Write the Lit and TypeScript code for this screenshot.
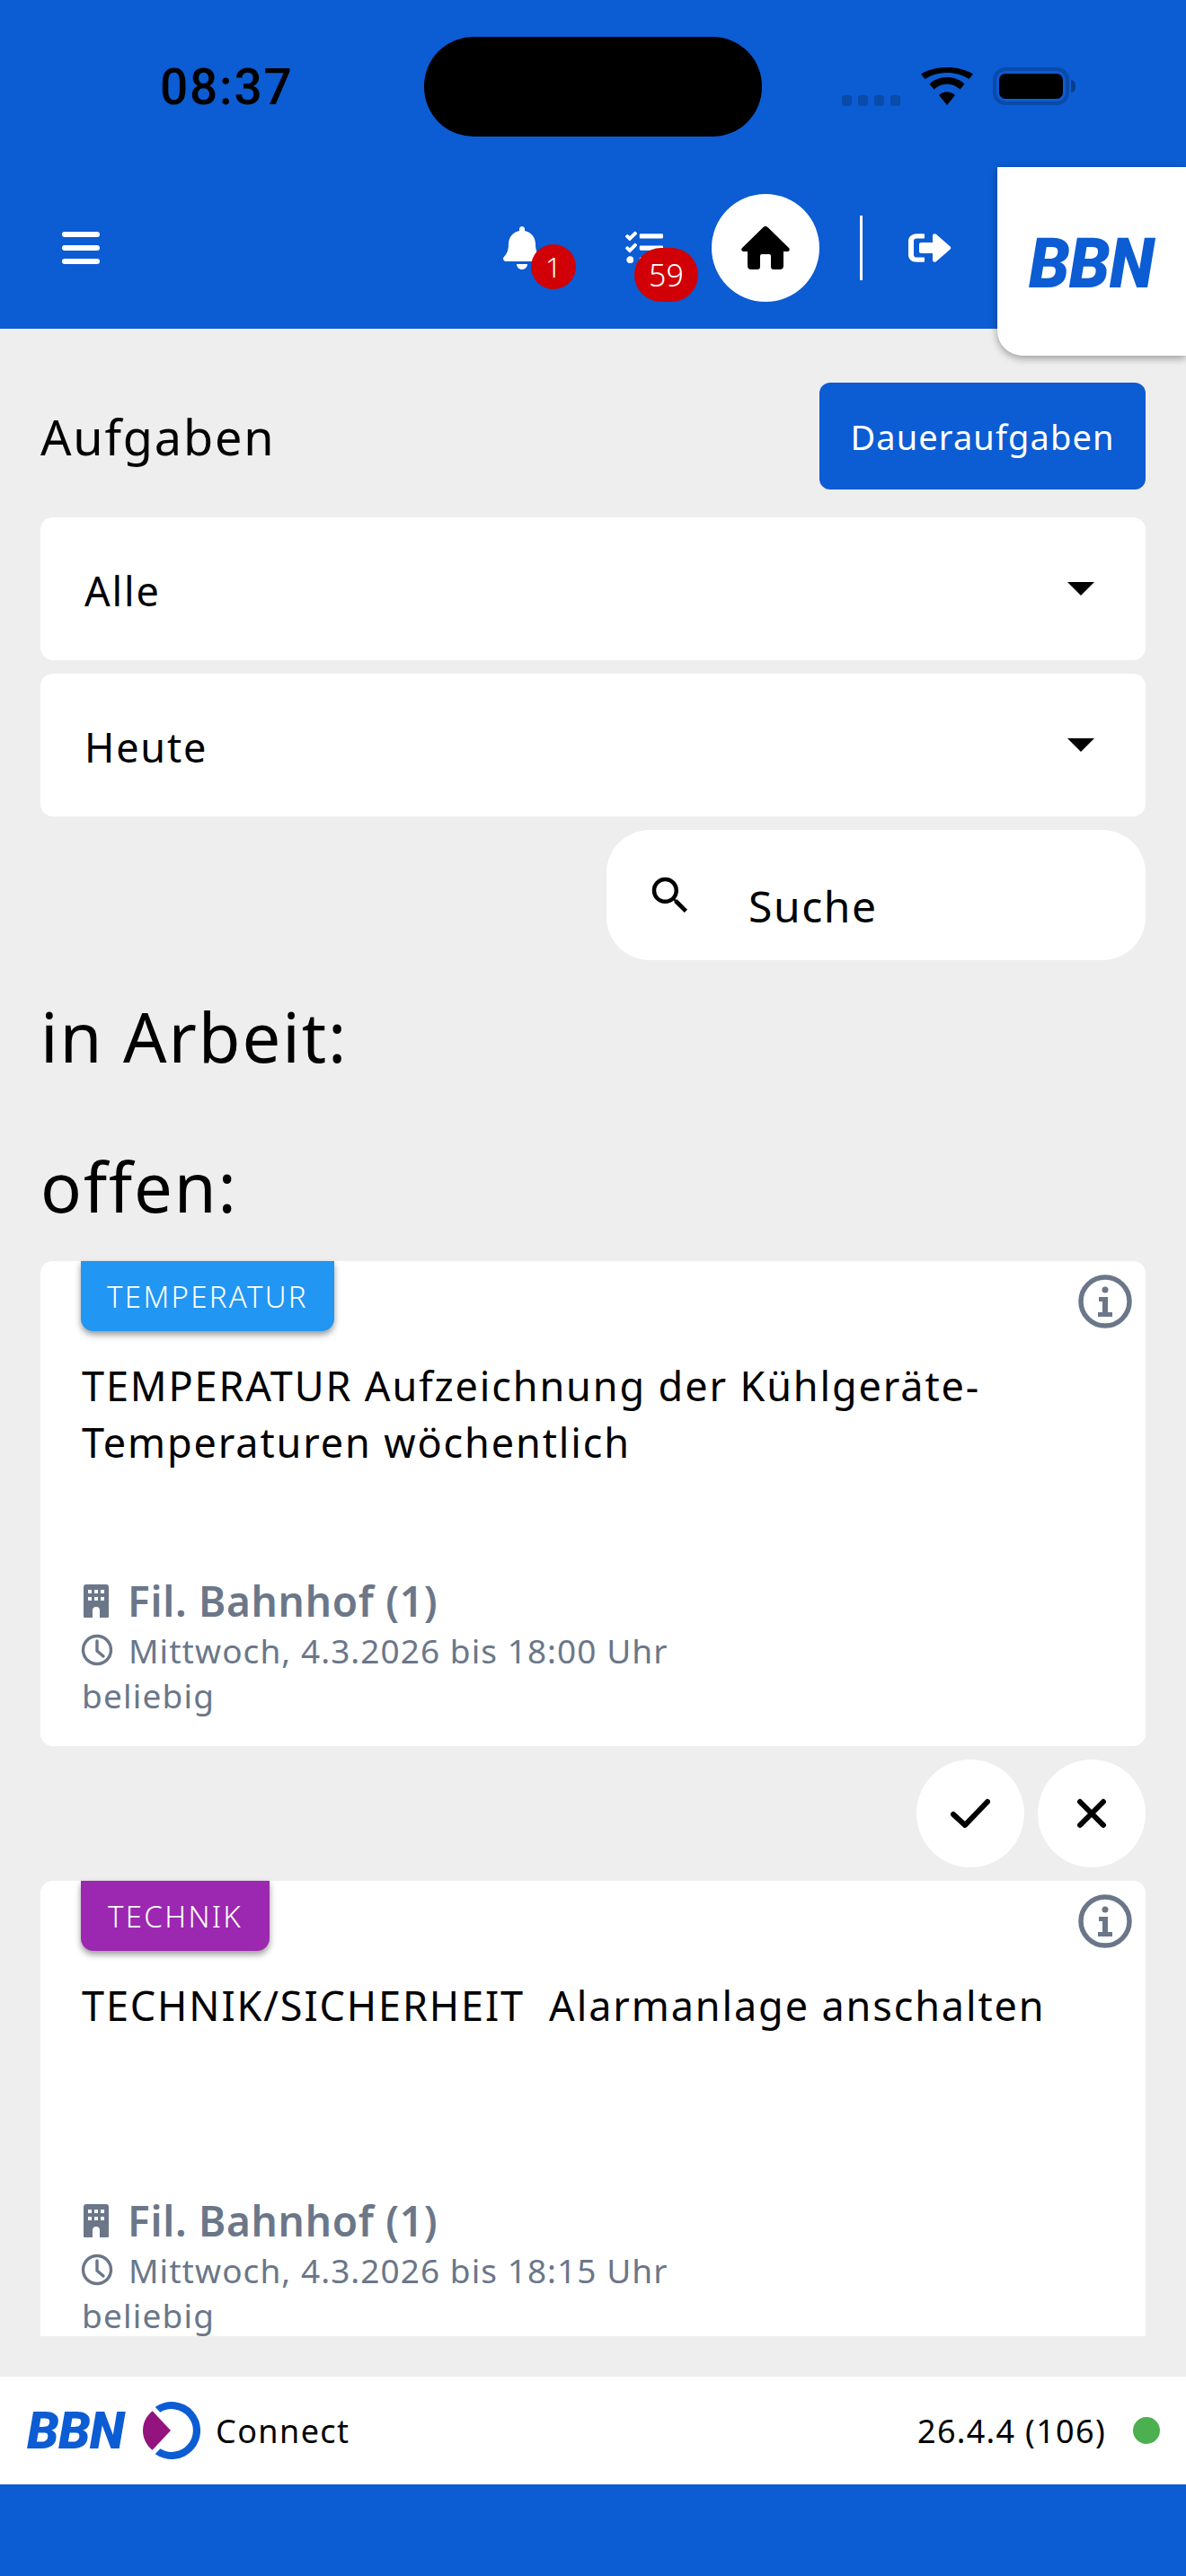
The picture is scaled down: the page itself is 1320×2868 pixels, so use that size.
import { LitElement, html, css, svg } from "lit";
import { customElement } from "lit/decorators.js";

const bell = "M224 512c35.32 0 63.97-28.65 63.97-64H160.03c0 35.35 28.65 64 63.97 64zm215.39-149.71c-19.32-20.76-55.47-51.99-55.47-154.29 0-77.7-54.48-139.9-127.94-155.16V32c0-17.67-14.32-32-31.98-32s-31.98 14.33-31.98 32v20.84C118.56 68.1 64.08 130.3 64.08 208c0 102.3-36.15 133.53-55.47 154.29-6 6.45-8.66 14.16-8.61 21.71.11 16.4 12.98 32 32.1 32h383.8c19.12 0 32-15.6 32.1-32 .05-7.55-2.61-15.27-8.61-21.71z";
const tasks = "M139.61 35.5a12 12 0 0 0-17 0L58.93 98.81l-22.7-22.12a12 12 0 0 0-17 0L3.53 92.41a12 12 0 0 0 0 17l47.59 47.4a12.78 12.78 0 0 0 17.61 0l15.59-15.62L156.52 69a12.09 12.09 0 0 0 .09-17zm0 159.19a12 12 0 0 0-17 0l-63.68 63.72-22.7-22.1a12 12 0 0 0-17 0L3.53 252a12 12 0 0 0 0 17L51 316.5a12.77 12.77 0 0 0 17.6 0l15.7-15.69 72.2-72.22a12 12 0 0 0 .09-16.9zM64 368c-26.49 0-48.59 21.5-48.59 48S37.53 464 64 464a48 48 0 0 0 0-96zm432 16H208a16 16 0 0 0-16 16v32a16 16 0 0 0 16 16h288a16 16 0 0 0 16-16v-32a16 16 0 0 0-16-16zm0-320H208a16 16 0 0 0-16 16v32a16 16 0 0 0 16 16h288a16 16 0 0 0 16-16V80a16 16 0 0 0-16-16zm0 160H208a16 16 0 0 0-16 16v32a16 16 0 0 0 16 16h288a16 16 0 0 0 16-16v-32a16 16 0 0 0-16-16z";
const signout = "M497 273L329 441c-15 15-41 4.5-41-17v-96H152c-13.3 0-24-10.7-24-24v-96c0-13.3 10.7-24 24-24h136V88c0-21.4 25.9-32 41-17l168 168c9.3 9.4 9.3 24.6 0 34zM192 436v-40c0-6.6-5.4-12-12-12H96c-17.7 0-32-14.3-32-32V160c0-17.7 14.3-32 32-32h84c6.6 0 12-5.4 12-12V76c0-6.6-5.4-12-12-12H96c-53 0-96 43-96 96v192c0 53 43 96 96 96h84c6.6 0 12-5.4 12-12z";

const infoIcon = svg`<circle cx="30" cy="30" r="27" fill="none" stroke="currentColor" stroke-width="5.500"/><circle cx="30" cy="17" r="3.500" fill="currentColor"/><path d="M23 25h10v17h5v5H22v-5h5V30h-4z" fill="currentColor"/>`;
const buildingIcon = svg`<path fill-rule="evenodd" fill="currentColor" d="M3 0h22a3 3 0 0 1 3 3v33a1 1 0 0 1-1 1H18v-8a4 4 0 0 0-8 0v8H1a1 1 0 0 1-1-1V3a3 3 0 0 1 3-3zM5 6v4h4V6zm7 0v4h4V6zm7 0v4h4V6zM5 14v4h4v-4zm7 0v4h4v-4zm7 0v4h4v-4z"/>`;
const clockIcon = svg`<circle cx="18" cy="18" r="15.500" fill="none" stroke="currentColor" stroke-width="3.400"/><path d="M18 8v11l7 6" fill="none" stroke="currentColor" stroke-width="3.400" stroke-linecap="round" stroke-linejoin="round"/>`;

interface Task { tag: string; color: string; tagWidth: number; title: string; due: string; }
const TASKS: Task[] = [
  { tag: "TEMPERATUR", color: "#2196f3", tagWidth: 282, title: "TEMPERATUR Aufzeichnung der Kühlgeräte-\nTemperaturen wöchentlich", due: "Mittwoch, 4.3.2026 bis 18:00 Uhr" },
  { tag: "TECHNIK", color: "#9c27b0", tagWidth: 210, title: "TECHNIK/SICHERHEIT  Alarmanlage anschalten", due: "Mittwoch, 4.3.2026 bis 18:15 Uhr" },
];

@customElement("app-root")
export class AppRoot extends LitElement {
  static styles = css`
    :host { display: block; width: 1320px; height: 2868px; font-family: "Noto Sans", sans-serif; color: #000; }
    * { box-sizing: border-box; }
    .page { width: 1320px; height: 2868px; background: #eeeeee; display: flex; flex-direction: column; overflow: hidden; }

    .head { height: 366px; flex: none; background: #0c5cd3; display: flex; flex-direction: column; position: relative; z-index: 2; }
    .status { height: 186px; flex: none; display: flex; align-items: flex-start; position: relative; }
    .time { margin: 70px 0 0 178px; width: 294px; font-family: Roboto, sans-serif; font-weight: 500; font-size: 55px; line-height: 54px; letter-spacing: 1.800px; }
    .island { margin-top: 41px; width: 376px; height: 111px; border-radius: 55px; background: #000; }
    .dots { margin: 106px 0 0 89px; display: flex; gap: 7px; }
    .dots i { width: 11px; height: 12px; border-radius: 3.500px; background: #0a4aa8; display: block; }
    .wifi { margin: 75px 0 0 23px; width: 58px; height: 42px; display: block; }
    .batt { margin: 75px 0 0 22px; display: block; width: 94px; height: 42px; }

    .bar { height: 180px; flex: none; display: flex; align-items: center; }
    .burger { margin-left: 69px; width: 42px; display: flex; flex-direction: column; gap: 9px; }
    .burger i { display: block; height: 6px; width: 42px; border-radius: 3px; background: #fff; }
    .ico { display: block; position: relative; color: #fff; flex: none; }
    .ico svg { display: block; width: 100%; height: 100%; fill: currentColor; }
    .bell { margin-left: 449px; width: 42px; height: 48px; }
    .tasks { margin-left: 91px; width: 48px; height: 42px; }
    .badge { position: absolute; background: #d00006; color: #fff; border-radius: 50%; display: flex; align-items: center; justify-content: center; font-weight: 300; line-height: 1; }
    .bell .badge { left: 31px; top: 20px; width: 50px; height: 50px; font-size: 32px; }
    .tasks .badge { left: 13px; top: 21px; width: 71px; height: 60px; border-radius: 30px; font-size: 34px; }
    .home { margin-left: 51px; width: 120px; height: 120px; border-radius: 50%; background: #fff; display: flex; align-items: center; justify-content: center; flex: none; }
    .home svg { width: 54px; height: 48px; display: block; }
    .divider { margin-left: 45px; width: 3px; height: 72px; background: #fff; flex: none; }
    .signout { margin-left: 51px; width: 48px; height: 42px; }
    .tab { margin-left: 51px; align-self: flex-start; width: 210px; height: 210px; background: #fff; border-bottom-left-radius: 28px; box-shadow: 0 3px 8px rgba(0,0,0,.35); display: flex; align-items: center; padding-left: 35px; flex: none; }
    .logo { font-family: Roboto, sans-serif; font-style: italic; font-weight: 900; color: #0c5cd3; letter-spacing: -1px; line-height: 1; }
    .tab .logo { font-size: 77px; transform: scaleX(0.95); transform-origin: left; margin-top: 6px; }

    .scroll { flex: 1; overflow: hidden; height: 2234px; padding: 60px 45px 0; }
    .titlerow { display: flex; justify-content: space-between; align-items: center; height: 119px; }
    .title { font-size: 54px; letter-spacing: 1.800px; }
    .btn { width: 363px; height: 119px; background: #0c5cd3; color: #fff; border-radius: 12px; display: flex; align-items: center; justify-content: center; font-size: 38px; letter-spacing: 1.100px; }
    .select { margin-top: 31px; height: 159px; background: #fff; border-radius: 14px; display: flex; align-items: center; justify-content: space-between; padding: 0 57px 0 49px; font-size: 45px; letter-spacing: 1.800px; }
    .select + .select { margin-top: 15px; }
    .select span { padding-top: 3px; }
    .select svg { width: 30px; height: 15px; display: block; }
    .searchrow { display: flex; justify-content: flex-end; margin-top: 15px; }
    .search { width: 600px; height: 145px; background: #fff; border-radius: 48px; display: flex; align-items: center; padding-left: 44px; font-size: 48px; letter-spacing: 1.600px; }
    .search svg { width: 54px; height: 54px; display: block; }
    .search span { margin-left: 60px; padding-top: 24px; }
    .section { font-size: 76px; line-height: 98px; letter-spacing: 1.900px; margin-top: 36px; }
    .section.next { margin-top: 69px; }

    .card { position: relative; margin-top: 34px; height: 540px; background: #fff; border-radius: 14px; padding: 0 46px; }
    .card.clip { height: 600px; margin-top: 15px; }
    .tag { height: 78px; border-radius: 0 0 14px 14px; color: #fff; display: inline-flex; align-items: center; justify-content: center; font-size: 33px; font-weight: 300; letter-spacing: 2.300px; box-shadow: 0 4px 7px rgba(0,0,0,.4); margin-left: -1px; }
    .info { position: absolute; right: 15px; top: 15px; width: 60px; height: 60px; display: block; color: #6b7789; }
    .task { margin-top: 29px; height: 241px; font-size: 45px; line-height: 63px; letter-spacing: 1.870px; white-space: pre-wrap; }
    .loc { display: flex; align-items: center; height: 60px; color: #6b7789; font-weight: 600; font-size: 46px; letter-spacing: 0.700px; }
    .loc svg { width: 28px; height: 37px; margin: 0 21px 0 2px; flex: none; }
    .due { display: flex; align-items: center; height: 50px; color: #6b7789; font-size: 37px; letter-spacing: 1.050px; font-weight: 400; margin-left: -1px; }
    .due svg { width: 36px; height: 36px; margin-right: 17px; flex: none; }
    .any { height: 50px; line-height: 50px; color: #6b7789; font-size: 37px; letter-spacing: 1.200px; padding-top: 1px; }
    .actions { display: flex; justify-content: flex-end; gap: 15px; margin-top: 15px; }
    .act { width: 120px; height: 120px; border-radius: 50%; background: #fff; display: flex; align-items: center; justify-content: center; }
    .act svg { width: 48px; height: 36px; display: block; }

    .foot { flex: none; height: 120px; background: #fff; display: flex; align-items: center; padding-left: 30px; padding-right: 29px; margin-top: 45px; }
    .foot .logo { font-size: 57px; letter-spacing: -0.800px; width: 110px; }
    .mark { width: 64px; height: 64px; display: block; margin-left: 19px; flex: none; }
    .conn { margin-left: 17px; font-size: 36px; letter-spacing: 1.400px; }
    .ver { margin-left: auto; font-size: 36px; letter-spacing: 1.300px; }
    .dot { width: 30px; height: 30px; border-radius: 50%; background: #4caf50; margin-left: 30px; }
    .bottom { flex: none; height: 102px; background: #0c5cd3; }
  `;

  private card(t: Task, clip: boolean) {
    return html`<div class="card ${clip ? "clip" : ""}">
      <div class="tag" style="background:${t.color};width:${t.tagWidth}px">${t.tag}</div>
      <svg class="info" viewBox="0 0 60 60">${infoIcon}</svg>
      <div class="task">${t.title}</div>
      <div class="loc"><svg viewBox="0 0 28 37">${buildingIcon}</svg>Fil. Bahnhof (1)</div>
      <div class="due"><svg viewBox="0 0 36 36">${clockIcon}</svg>${t.due}</div>
      <div class="any">beliebig</div>
    </div>`;
  }

  render() {
    return html`<div class="page">
      <div class="head">
        <div class="status">
          <div class="time">08:37</div>
          <div class="island"></div>
          <div class="dots"><i></i><i></i><i></i><i></i></div>
          <svg class="wifi" viewBox="0 0 58 42"><path d="M29 42 L20 31 C25 26 33 26 38 31 Z M14.500 24.500 L9.500 18.500 C19 8.500 39 8.500 48.500 18.500 L43.500 24.500 C35 16.500 23 16.500 14.500 24.500 Z M4.500 13 L0 7.500 C15 -2.500 43 -2.500 58 7.500 L53.500 13 C40 3.500 18 3.500 4.500 13 Z"/></svg>
          <svg class="batt" viewBox="0 0 94 42"><rect x="2" y="2" width="81" height="38" rx="12" fill="none" stroke="#0a4aa8" stroke-width="4"/><rect x="7" y="7" width="71" height="28" rx="7" fill="#000"/><path d="M87 14c4 0 5 4 5 7s-1 7-5 7z" fill="#0a3d8c"/></svg>
        </div>
        <div class="bar">
          <div class="burger"><i></i><i></i><i></i></div>
          <div class="ico bell"><svg viewBox="0 0 448 512"><path d="${bell}"/></svg><span class="badge">1</span></div>
          <div class="ico tasks"><svg viewBox="0 0 512 512"><path d="${tasks}"/></svg><span class="badge">59</span></div>
          <div class="home"><svg viewBox="0 0 54 48"><path d="M27 0c1 0 2 .5 2.500 1L53 24c1.500 1.500 .8 4-1.500 4H47v16a4 4 0 0 1-4 4h-7a3 3 0 0 1-3-3V33a2 2 0 0 0-2-2h-8a2 2 0 0 0-2 2v12a3 3 0 0 1-3 3h-7a4 4 0 0 1-4-4V28H2.500C.2 28-.5 25.500 1 24L24.500 1c.5-.5 1.500-1 2.500-1z"/></svg></div>
          <div class="divider"></div>
          <div class="ico signout"><svg viewBox="0 0 512 512" preserveAspectRatio="none"><path d="${signout}"/></svg></div>
          <div class="tab"><span class="logo">BBN</span></div>
        </div>
      </div>

      <div class="scroll">
        <div class="titlerow"><div class="title">Aufgaben</div><div class="btn">Daueraufgaben</div></div>
        <div class="select"><span>Alle</span><svg viewBox="0 0 30 15"><path d="M0 0h30L15 15z"/></svg></div>
        <div class="select"><span>Heute</span><svg viewBox="0 0 30 15"><path d="M0 0h30L15 15z"/></svg></div>
        <div class="searchrow"><div class="search"><svg viewBox="0 0 24 24"><path d="M15.500 14h-.79l-.28-.27A6.470 6.470 0 0 0 16 9.500 6.500 6.500 0 1 0 9.500 16c1.610 0 3.090-.59 4.230-1.570l.27.28v.79l5 4.990L20.490 19l-4.990-5zm-6 0C7.010 14 5 11.990 5 9.500S7.010 5 9.500 5 14 7.010 14 9.500 11.990 14 9.500 14z"/></svg><span>Suche</span></div></div>
        <div class="section">in Arbeit:</div>
        <div class="section next">offen:</div>
        ${this.card(TASKS[0], false)}
        <div class="actions">
          <div class="act"><svg viewBox="0 0 48 36"><path d="M5 19l13 12L43 5" fill="none" stroke="#000" stroke-width="6" stroke-linecap="round" stroke-linejoin="round"/></svg></div>
          <div class="act"><svg viewBox="0 0 48 36"><path d="M11 5l26 26M37 5L11 31" fill="none" stroke="#000" stroke-width="6" stroke-linecap="round"/></svg></div>
        </div>
        ${this.card(TASKS[1], true)}
      </div>

      <div class="foot">
        <span class="logo">BBN</span>
        <svg class="mark" viewBox="0 0 63 63"><path d="M13.500 5.700A31.500 31.500 0 1 1 13.500 57.300L19 51.400A23.500 23.500 0 1 0 19 11.600Z" fill="#0c5cd3"/><path d="M10.500 10L30.500 31.500L10.500 53C-3.500 42 -3.500 21 10.500 10Z" fill="#93137f"/></svg>
        <span class="conn">Connect</span>
        <span class="ver">26.4.4 (106)</span>
        <span class="dot"></span>
      </div>
      <div class="bottom"></div>
    </div>`;
  }
}
